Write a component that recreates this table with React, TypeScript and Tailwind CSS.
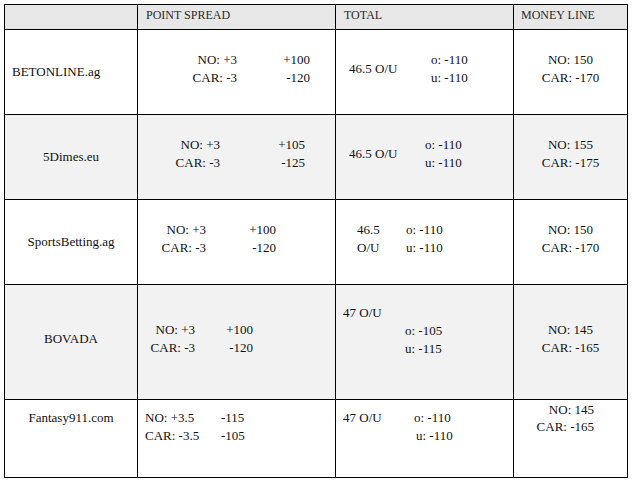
import React from "react";

// Odds comparison table, laid out like the original word-processor table
const cell = "border-r border-b border-black";

const Two: React.FC<{ a: string; b: string; className?: string }> = ({ a, b, className }) => (
    <div className={className}>
        <div>{a}</div>
        <div>{b}</div>
    </div>
);

export default function App() {
    return (
        <div className="w-[635px] h-[483px] bg-white pl-[4px] pt-[4px] text-[#111] text-[13px] leading-[18px]" style={{ fontFamily: '"Liberation Serif", "DejaVu Serif", serif' }}>
            <div className="grid grid-cols-[133px_198px_178px_114px] grid-rows-[25px_85px_85px_85px_115px_78px] w-[624px] border-l border-t border-black">
                {/* header */}
                <div className={`${cell} bg-[#e7e7e7]`} />
                <div className={`${cell} bg-[#e7e7e7] pl-[8px] text-[12px] text-[#2a2a2a] leading-[20px]`}>POINT SPREAD</div>
                <div className={`${cell} bg-[#e7e7e7] pl-[8px] text-[12px] text-[#2a2a2a] leading-[20px]`}>TOTAL</div>
                <div className={`${cell} bg-[#e7e7e7] pl-[7px] text-[12px] text-[#2a2a2a] leading-[20px]`}>MONEY LINE</div>

                {/* BETONLINE */}
                <div className={`${cell} flex items-center pl-[7px]`}>BETONLINE.ag</div>
                <div className={`${cell} flex pt-[21px]`}>
                    <Two a="NO: +3" b="CAR: -3" className="w-[99px] text-right" />
                    <Two a="+100" b="-120" className="w-[73px] text-right" />
                </div>
                <div className={`${cell} flex pt-[21px] pl-[13px]`}>
                    <div className="w-[82px] pt-[9px]">46.5 O/U</div>
                    <Two a="o: -110" b="u: -110" />
                </div>
                <div className={`${cell} pt-[21px] text-center`}>
                    <Two a="NO: 150" b="CAR: -170" />
                </div>

                {/* 5Dimes */}
                <div className={`${cell} bg-[#f2f2f2] flex items-center justify-center`}>5Dimes.eu</div>
                <div className={`${cell} bg-[#f2f2f2] flex pt-[21px]`}>
                    <Two a="NO: +3" b="CAR: -3" className="w-[82px] text-right" />
                    <Two a="+105" b="-125" className="w-[85px] text-right" />
                </div>
                <div className={`${cell} bg-[#f2f2f2] flex pt-[21px] pl-[13px]`}>
                    <div className="w-[76px] pt-[9px]">46.5 O/U</div>
                    <Two a="o: -110" b="u: -110" />
                </div>
                <div className={`${cell} bg-[#f2f2f2] pt-[21px] text-center`}>
                    <Two a="NO: 155" b="CAR: -175" />
                </div>

                {/* SportsBetting */}
                <div className={`${cell} flex items-center justify-center`}>SportsBetting.ag</div>
                <div className={`${cell} flex pt-[21px]`}>
                    <Two a="NO: +3" b="CAR: -3" className="w-[68px] text-right" />
                    <Two a="+100" b="-120" className="w-[70px] text-right" />
                </div>
                <div className={`${cell} flex pt-[21px] pl-[21px]`}>
                    <Two a="46.5" b="O/U" className="w-[49px]" />
                    <Two a="o: -110" b="u: -110" />
                </div>
                <div className={`${cell} pt-[21px] text-center`}>
                    <Two a="NO: 150" b="CAR: -170" />
                </div>

                {/* BOVADA */}
                <div className={`${cell} bg-[#f2f2f2] flex items-center justify-center pb-[6px]`}>BOVADA</div>
                <div className={`${cell} bg-[#f2f2f2] flex pt-[36px]`}>
                    <Two a="NO: +3" b="CAR: -3" className="w-[57px] text-right" />
                    <Two a="+100" b="-120" className="w-[58px] text-right" />
                </div>
                <div className={`${cell} bg-[#f2f2f2] pt-[19px]`}>
                    <div className="pl-[7px]">47 O/U</div>
                    <Two a="o: -105" b="u: -115" className="pl-[69px]" />
                </div>
                <div className={`${cell} bg-[#f2f2f2] pt-[36px] text-center`}>
                    <Two a="NO: 145" b="CAR: -165" />
                </div>

                {/* Fantasy911 */}
                <div className={`${cell} pt-[9px] text-center`}>Fantasy911.com</div>
                <div className={`${cell} flex pt-[9px] pl-[7px]`}>
                    <Two a="NO: +3.5" b="CAR: -3.5" className="w-[76px]" />
                    <Two a="-115" b="-105" />
                </div>
                <div className={`${cell} flex pt-[9px] pl-[7px]`}>
                    <div className="w-[71px]">47 O/U</div>
                    <div>
                        <div>o: -110</div>
                        <div className="pl-[2px]">u: -110</div>
                    </div>
                </div>
                <div className={`${cell} pt-[1px] pr-[33px] text-right leading-[17px]`}>
                    <Two a="NO: 145" b="CAR: -165" />
                </div>
            </div>
        </div>
    );
}
